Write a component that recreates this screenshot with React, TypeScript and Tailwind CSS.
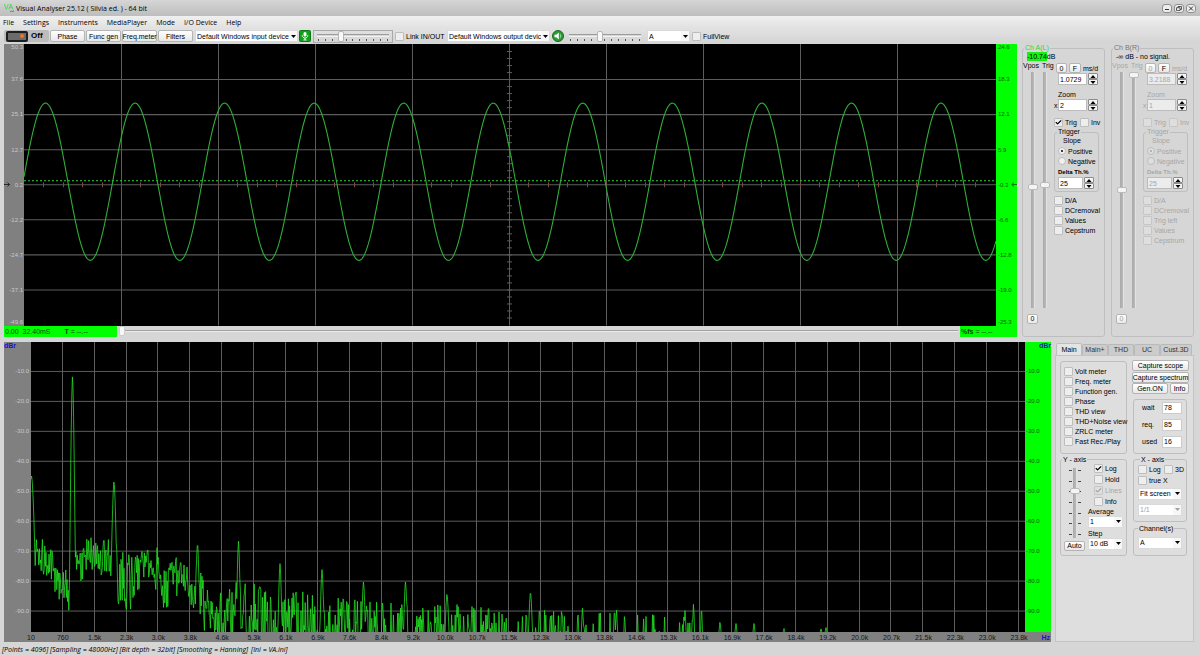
import React from "react";
import { Check } from "lucide-react";

/* ---------- signal data ---------- */

const SCOPE_W = 972;
const SCOPE_H = 281;
const SPEC_W = 994;
const SPEC_H = 291;

function wavePath(): string {
  const pts: string[] = [];
  for (let x = 0; x <= SCOPE_W; x += 1) {
    const y = 137.5 - 78.5 * Math.cos((2 * Math.PI * (x - 21.5)) / 89.55);
    pts.push(`${x} ${y.toFixed(1)}`);
  }
  return "M" + pts.join("L");
}

/* Noise band as [x, top, bottom] in plot units. */
const BAND: [number, number, number][] = [
  [0, 186, 205], [4, 200, 250], [6, 200, 220], [12, 192, 236], [20, 200, 244], [26, 218, 256],
  [32, 226, 278], [42, 204, 262], [48, 212, 248], [56, 190, 230], [64, 198, 226], [76, 192, 240],
  [84, 205, 255], [92, 208, 275], [100, 212, 270], [108, 208, 248], [116, 204, 235],
  [124, 220, 256], [132, 226, 272], [142, 216, 268], [150, 212, 240], [160, 230, 262],
  [168, 226, 285], [176, 234, 295], [186, 244, 310], [200, 238, 300], [224, 240, 310],
  [242, 252, 325], [270, 248, 325], [310, 254, 325], [350, 260, 335], [400, 262, 345],
  [480, 266, 365], [560, 270, 385], [620, 272, 400], [660, 274, 440], [680, 278, 620],
  [740, 280, 760], [800, 286, 1600], [994, 288, 3000],
];

/* Harmonic peaks as [x, top, half width]. */
const PEAKS: [number, number, number][] = [
  [0.5, 133, 4], [5.5, 196, 1], [41.5, 33, 3], [83, 138, 3], [127, 211, 1], [126, 205, 1], [143, 221, 1],
  [166.5, 200, 2], [207.5, 198, 2], [249, 221, 2], [291, 227, 2], [332.5, 239, 2], [374.5, 239, 2],
  [416, 251, 2], [426, 262, 1], [441, 264, 1], [457.5, 262, 1], [499.5, 249, 2], [508.5, 265, 1],
  [551.5, 265, 1], [583.5, 267, 1], [585.5, 267, 1], [654, 268, 1], [662.5, 261, 1], [670.5, 265, 1],
  [689, 279, 1], [705, 281, 1], [723, 281, 1], [753, 286, 1], [790, 286, 1], [795, 285, 1],
];

function bandAt(x: number): [number, number] {
  for (let i = 1; i < BAND.length; i++) {
    const [x1, t1, b1] = BAND[i];
    if (x <= x1) {
      const [x0, t0, b0] = BAND[i - 1];
      const k = (x - x0) / (x1 - x0);
      return [t0 + (t1 - t0) * k, b0 + (b1 - b0) * k];
    }
  }
  return [SPEC_H, SPEC_H];
}

function spectrumPath(): string {
  let seed = 4096;
  const rnd = () => {
    seed = (seed * 1103515245 + 12345) % 2147483648;
    return seed / 2147483648;
  };
  const pts: string[] = [];
  for (let x = 0; x <= 800; x += 0.6) {
    const [top, bottom] = bandAt(x);
    let y = top + (bottom - top) * rnd();
    for (const [px, py, w] of PEAKS) {
      const d = Math.abs(x - px);
      if (d <= w) {
        const edge = Math.min(top + 35, SPEC_H);
        y = Math.min(y, py + (edge - py) * Math.pow(d / w, 1.6));
      }
    }
    pts.push(`${x.toFixed(1)} ${Math.min(y + 1, SPEC_H + 2).toFixed(1)}`);
  }
  return "M" + pts.join("L");
}

const WAVE = wavePath();
const SPECTRUM = spectrumPath();

const SCOPE_LEFT = ["50.3", "37.6", "25.1", "12.7", "0.2", "-12.2", "-24.7", "-37.1", "-49.6"];
const SCOPE_RIGHT = ["24.6", "18.3", "12.1", "5.9", "-0.3", "-6.6", "-12.8", "-19.0", "-25.3"];
const DB = ["-10.0", "-20.0", "-30.0", "-40.0", "-50.0", "-60.0", "-70.0", "-80.0", "-90.0"];
const FREQ = [
  "10", "760", "1.5k", "2.3k", "3.0k", "3.8k", "4.6k", "5.3k", "6.1k", "6.9k", "7.6k", "8.4k", "9.2k",
  "10.0k", "10.7k", "11.5k", "12.3k", "13.0k", "13.8k", "14.6k", "15.3k", "16.1k", "16.9k", "17.6k",
  "18.4k", "19.2k", "20.0k", "20.7k", "21.5k", "22.3k", "23.0k", "23.8k",
];

/* ---------- controls ---------- */

function Btn({ children, className = "", disabled = false }: { children: React.ReactNode; className?: string; disabled?: boolean }) {
  return (
    <button
      disabled={disabled}
      className={`flex items-center justify-center whitespace-nowrap rounded-[2px] border border-[#b4b4b4] bg-gradient-to-b from-white to-[#e8e8e8] leading-none disabled:text-[#a0a0a0] ${className}`}
    >
      {children}
    </button>
  );
}

function Box({ label, checked = false, disabled = false, className = "" }: { label: string; checked?: boolean; disabled?: boolean; className?: string }) {
  return (
    <label className={`flex h-[10px] items-center gap-[2px] whitespace-nowrap leading-none ${disabled ? "text-[#a6a6a6]" : ""} ${className}`}>
      <span className="grid size-[9px] shrink-0 place-items-center">
        <input
          type="checkbox"
          defaultChecked={checked}
          disabled={disabled}
          className="peer col-start-1 row-start-1 size-[9px] appearance-none rounded-[1px] border border-[#bdbdbd] bg-[#eeeeee] disabled:border-[#c6c6c6] disabled:bg-[#dedede]"
        />
        <Check size={7} strokeWidth={4} className="pointer-events-none invisible col-start-1 row-start-1 peer-checked:visible" />
      </span>
      {label}
    </label>
  );
}

function Radio({ label, name, checked = false, disabled = false }: { label: string; name: string; checked?: boolean; disabled?: boolean }) {
  return (
    <label className="flex h-[10px] items-center gap-[2px] leading-none">
      <span className="grid size-2 shrink-0 place-items-center">
        <input
          type="radio"
          name={name}
          defaultChecked={checked}
          disabled={disabled}
          className="peer col-start-1 row-start-1 size-2 appearance-none rounded-full border border-[#bdbdbd] bg-[#f0f0f0] disabled:bg-[#dedede]"
        />
        <span className="pointer-events-none invisible col-start-1 row-start-1 size-[2px] rounded-full bg-current peer-checked:visible" />
      </span>
      {label}
    </label>
  );
}

function Pick({ value, label, className = "", disabled = false }: { value: string; label: string; className?: string; disabled?: boolean }) {
  return (
    <span className={`grid items-center border border-[#dadada] bg-white ${disabled ? "text-[#a0a0a0]" : ""} ${className}`}>
      <select
        aria-label={label}
        disabled={disabled}
        className="col-start-1 row-start-1 h-full w-full min-w-0 appearance-none overflow-hidden bg-transparent pl-px pr-[7px] leading-none"
      >
        <option>{value}</option>
      </select>
      <span className="pointer-events-none col-start-1 row-start-1 flex h-full w-[8px] items-center justify-center justify-self-end bg-[#f7f7f7]">
        <svg width="5" height="3" viewBox="0 0 5 3" fill="currentColor">
          <path d="M0 0H5L2.5 3Z" />
        </svg>
      </span>
    </span>
  );
}

function Spin({ value, label, className = "", disabled = false }: { value: string; label: string; className?: string; disabled?: boolean }) {
  const half = "flex h-[6px] w-[10px] items-center justify-center rounded-[1px] border border-[#8c8c8c] bg-[#f4f4f4]";
  return (
    <span className="flex h-3 gap-px">
      <input
        aria-label={label}
        defaultValue={value}
        disabled={disabled}
        className={`border border-[#bcbcbc] bg-white pl-px leading-none disabled:bg-[#ececec] ${className}`}
      />
      <span className="flex flex-col text-black">
        <button aria-label={`${label} up`} disabled={disabled} className={half}>
          <svg width="6" height="3" viewBox="0 0 6 3" fill="currentColor"><path d="M0.5 3H5.5L3 0Z" /></svg>
        </button>
        <button aria-label={`${label} down`} disabled={disabled} className={half}>
          <svg width="6" height="3" viewBox="0 0 6 3" fill="currentColor"><path d="M0.5 0H5.5L3 3Z" /></svg>
        </button>
      </span>
    </span>
  );
}

function Group({ title, children, className = "", legend = "" }: { title?: string; children: React.ReactNode; className?: string; legend?: string }) {
  return (
    <fieldset className={`min-w-0 rounded-[3px] border border-[#bebebe] ${className}`}>
      {title && <legend className={`whitespace-nowrap px-px leading-[8px] ${legend}`}>{title}</legend>}
      {children}
    </fieldset>
  );
}

function VSlider({ label, value, className = "", disabled = false }: { label: string; value: number; className?: string; disabled?: boolean }) {
  return (
    <input
      type="range"
      aria-label={label}
      defaultValue={value}
      disabled={disabled}
      className={`w-[10px] appearance-none bg-[linear-gradient(90deg,transparent_3px,#a9a9a9_3px,#b9b9b9_6px,#e2e2e2_6px,#e2e2e2_7px,transparent_7px)] [direction:rtl] [writing-mode:vertical-lr] [&::-webkit-slider-thumb]:h-[6px] [&::-webkit-slider-thumb]:w-[10px] [&::-webkit-slider-thumb]:appearance-none [&::-webkit-slider-thumb]:rounded-[2px] [&::-webkit-slider-thumb]:border [&::-webkit-slider-thumb]:border-[#bbbbbb] [&::-webkit-slider-thumb]:bg-[#f4f4f4] ${className}`}
    />
  );
}

function HSlider({ label, value }: { label: string; value: number }) {
  return (
    <span className="grid w-[72px] items-start">
      <input
        type="range"
        aria-label={label}
        defaultValue={value}
        className="z-10 col-start-1 row-start-1 h-[11px] w-full appearance-none bg-[linear-gradient(180deg,transparent_3px,#9c9c9c_3px,#9c9c9c_4px,#d8d8d8_4px,#d8d8d8_5px,#f2f2f2_5px,#f2f2f2_6px,transparent_6px)] [&::-webkit-slider-thumb]:h-[11px] [&::-webkit-slider-thumb]:w-[6px] [&::-webkit-slider-thumb]:appearance-none [&::-webkit-slider-thumb]:rounded-[2px] [&::-webkit-slider-thumb]:border [&::-webkit-slider-thumb]:border-[#b5b5b5] [&::-webkit-slider-thumb]:bg-[#f8f8f8]"
      />
      <span className="col-start-1 row-start-1 flex justify-between px-px pt-2">
        {Array.from({ length: 11 }, (_, i) => (
          <i key={i} className="h-[2px] w-px bg-[#555555]" />
        ))}
      </span>
    </span>
  );
}

/* ---------- top bars ---------- */

function TitleBar() {
  const ctl = "flex h-[9px] w-[10px] items-center justify-center rounded-[3px] border border-[#8f8f8f] bg-[#ededed]";
  return (
    <header className="flex h-4 shrink-0 items-center gap-[2px] bg-gradient-to-b from-[#d6d6d6] to-[#bdbdbd] pl-1 pr-1 font-['Open_Sans',sans-serif]">
      <svg width="10" height="10" viewBox="0 0 10 10" fill="none" strokeWidth="0.9">
        <path d="M0.3 1L2.4 6.4L4.4 1M4.8 6.4L6.8 1L8.9 6.4M5.5 4.6H8.2" stroke="#49d95a" />
        <path d="M6 8.5H7.4V7.5M8 8.5H9.6V7.4" stroke="#e0503a" />
      </svg>
      <h1>Visual Analyser 25.12 ( Silvia ed. ) - 64 bit</h1>
      <div className="ml-auto flex gap-[2px]">
        <button aria-label="Minimize" className={ctl}>
          <svg width="6" height="5" viewBox="0 0 6 5" stroke="#333333"><path d="M1 3.5H5" /></svg>
        </button>
        <button aria-label="Restore" className={ctl}>
          <svg width="6" height="5" viewBox="0 0 6 5" stroke="#333333" strokeWidth="0.8" fill="none"><path d="M2 1.5V.5H5.5V3.4H4M.5 1.7H4V4.6H.5Z" /></svg>
        </button>
        <button aria-label="Close" className={ctl}>
          <svg width="6" height="5" viewBox="0 0 6 5" stroke="#333333"><path d="M1 .5L5 4.5M5 .5L1 4.5" /></svg>
        </button>
      </div>
    </header>
  );
}

function MenuBar() {
  return (
    <nav className="flex h-[13px] shrink-0 items-center gap-[9px] bg-gradient-to-b from-[#f0f0f0] to-[#e0e0e0] pl-[3px] font-['Open_Sans',sans-serif]">
      {["File", "Settings", "Instruments", "MediaPlayer", "Mode", "I/O Device", "Help"].map((m) => (
        <a key={m} href="#" className="whitespace-nowrap leading-none">{m}</a>
      ))}
    </nav>
  );
}

function ToolBar() {
  return (
    <div className="flex h-[14px] shrink-0 items-center bg-gradient-to-b from-[#e2e2e2] to-[#d4d4d4] pl-1">
      <button className="mr-px flex h-3 w-[45px] items-center gap-[3px] rounded-[2px] bg-[#bcbcbc] pl-[2px] text-[8px] font-bold leading-none">
        <span className="flex h-[11px] w-[22px] items-center justify-end rounded-[2px] border-2 border-[#1d1d1d] bg-[#6b6b6b] pr-[2px]">
          <span className="size-1 rounded-full bg-[#f0742c]" />
        </span>
        Off
      </button>
      <div className="flex gap-px">
        {["Phase", "Func gen", "Freq.meter", "Filters"].map((b) => (
          <Btn key={b} className="h-3 w-[35px]">{b}</Btn>
        ))}
      </div>
      <Pick label="Input device" value="Default Windows input device" className="ml-[2px] h-3 w-[103px]" />
      <svg width="12" height="12" viewBox="0 0 12 12" className="mx-px">
        <rect x="0.5" y="0.5" width="11" height="11" rx="1" fill="#12a01c" stroke="#0b7a14" />
        <rect x="4.5" y="2" width="3" height="4.5" rx="1.5" fill="#ffffff" />
        <path d="M3.2 5.2C3.2 9 8.8 9 8.8 5.2M6 8V10M4.4 10H7.6" stroke="#ffffff" fill="none" strokeWidth="0.9" />
      </svg>
      <span className="ml-px flex h-[13px] w-[80px] items-center justify-center border border-[#a9a9a9]">
        <HSlider label="Input level" value={32} />
      </span>
      <Box label="Link IN/OUT" className="ml-[2px] mr-px w-[51px]" />
      <Pick label="Output device" value="Default Windows output devic" className="h-3 w-[103px]" />
      <svg width="12" height="12" viewBox="0 0 12 12" className="ml-[2px] mr-[5px]">
        <circle cx="6" cy="6" r="5.5" fill="#2c9a35" stroke="#176b1f" />
        <path d="M2.5 4.8H4.2L6.8 2.6V9.4L4.2 7.2H2.5Z" fill="#ffffff" />
        <path d="M8 4.2C9 5.2 9 6.8 8 7.8" stroke="#bdf0c0" fill="none" strokeWidth="0.8" />
      </svg>
      <HSlider label="Output level" value={43} />
      <Pick label="Channel" value="A" className="ml-[6px] mr-[2px] h-3 w-[43px]" />
      <Box label="FullView" />
    </div>
  );
}

/* ---------- oscilloscope ---------- */

function LevelColumn({ labels, className }: { labels: string[]; className: string }) {
  const last = labels.length - 1;
  return (
    <div className={`flex shrink-0 flex-col text-[6px] ${className}`}>
      <span className="h-0 leading-[7px]">{labels[0]}</span>
      {labels.slice(1, last).map((l) => (
        <span key={l} className="flex min-h-0 flex-1 items-end leading-[0px]">{l}</span>
      ))}
      <span className="flex min-h-0 flex-1 items-end leading-[7px]">{labels[last]}</span>
    </div>
  );
}

function Scope() {
  return (
    <section className="flex min-h-0 min-w-0 flex-1 flex-col">
      <div className="flex min-h-0 flex-1">
        <div className="flex w-5 shrink-0 justify-between bg-[#808080] pr-px">
          <svg viewBox="0 0 6 5" className="h-[5px] w-[6px] shrink-0 self-center" stroke="#111111" fill="none">
            <path d="M0 2.5H5.5M3.5 .5L5.5 2.5L3.5 4.5" strokeWidth="0.8" />
          </svg>
          <LevelColumn labels={SCOPE_LEFT} className="w-[13px] items-end text-[#c9c9c9]" />
        </div>
        <svg viewBox={`0 0 ${SCOPE_W} ${SCOPE_H}`} preserveAspectRatio="none" className="h-full min-h-0 w-0 min-w-0 flex-1 bg-black" fill="none">
          <g stroke="#5c5c5c">
            {[1, 2, 3, 4, 5, 6, 7, 8, 9].map((i) => (
              <path key={i} d={`M${Math.round(97 * i) + 0.5} 0V${SCOPE_H}`} />
            ))}
            {[1, 2, 3, 4, 5, 6, 7].map((i) => (
              <path key={i} d={`M0 ${35 * i + 0.5}H${SCOPE_W}`} />
            ))}
            {Array.from({ length: 39 }, (_, i) => (
              <path key={i} d={`M483 ${7 * (i + 1) + 0.5}H488`} />
            ))}
          </g>
          <g stroke="#7a4a42">
            {Array.from({ length: 49 }, (_, i) => (
              <path key={i} d={`M${Math.round(19.4 * (i + 1)) + 0.5} 138V143`} />
            ))}
          </g>
          <path d={`M0 136.5H${SCOPE_W}`} stroke="#2fd33c" strokeDasharray="2 2" />
          <path d={WAVE} stroke="#2fae38" strokeWidth="1.1" />
        </svg>
        <div className="flex w-[21px] shrink-0 justify-between bg-[#00ff00] pl-[2px]">
          <LevelColumn labels={SCOPE_RIGHT} className="w-[12px] text-[#0b5a0b]" />
          <svg viewBox="0 0 6 5" className="h-[5px] w-[6px] shrink-0 self-center" stroke="#0b5a0b" fill="none">
            <path d="M6 2.5H1M3 .5L.7 2.5L3 4.5" strokeWidth="0.8" />
          </svg>
        </div>
      </div>
      <div className="flex h-[11px] shrink-0 items-center">
        <div className="flex h-full w-[113px] items-center gap-[14px] bg-[#00ff00] pl-px leading-none text-[#063d06]">
          <span>0.00&nbsp; 32.40mS</span>
          <span><b>T</b> = --.--</span>
        </div>
        <input
          type="range"
          aria-label="Time position"
          defaultValue={0}
          className="mx-[2px] h-[10px] min-w-0 flex-1 appearance-none bg-[linear-gradient(180deg,transparent_4px,#a0a0a0_4px,#a0a0a0_5px,#ececec_5px,#ececec_6px,transparent_6px)] [&::-webkit-slider-thumb]:h-[10px] [&::-webkit-slider-thumb]:w-[6px] [&::-webkit-slider-thumb]:appearance-none [&::-webkit-slider-thumb]:rounded-[2px] [&::-webkit-slider-thumb]:border [&::-webkit-slider-thumb]:border-[#cccccc] [&::-webkit-slider-thumb]:bg-[#f8f8f8]"
        />
        <div className="flex h-full w-[57px] items-center bg-[#00ff00] pl-px leading-none text-[#063d06]">
          <span><b>%fs</b> = --.--</span>
        </div>
      </div>
    </section>
  );
}

/* ---------- channel panels ---------- */

interface ChannelProps {
  title: string;
  titleClass: string;
  level: React.ReactNode;
  msd: string;
  zoom: string;
  pos: number;
  trig: number;
  flags: string[];
  off?: boolean;
}

function Channel({ title, titleClass, level, msd, zoom, pos, trig, flags, off = false }: ChannelProps) {
  return (
    <Group title={title} legend={titleClass} className={`flex w-[83px] flex-col ${off ? "text-[#a6a6a6]" : ""}`}>
      <div className="ml-[4px] whitespace-nowrap leading-[9px]">{level}</div>
      <div className="flex min-h-0 flex-1">
        <div className="flex w-[31px] shrink-0 flex-col pb-3">
          <div className="flex gap-[3px] whitespace-nowrap leading-[10px]">
            <span>Vpos</span>
            <span>Trig</span>
          </div>
          <div className="flex min-h-0 flex-1 gap-[2px] pb-[6px] pl-[5px] pt-px">
            <VSlider label={`${title} vertical position`} value={pos} disabled={off} />
            <VSlider label={`${title} trigger level`} value={trig} disabled={off} />
          </div>
          <Btn disabled={off} className="ml-1 h-[10px] w-[11px]">0</Btn>
        </div>
        <div className="flex min-w-0 flex-1 flex-col pt-[2px]">
          <div className="ml-[2px] flex items-center gap-[2px] leading-none">
            <Btn disabled={off} className="h-[10px] w-[11px]">0</Btn>
            <Btn className="h-[10px] w-[12px] text-black">F</Btn>
            <span className="whitespace-nowrap">ms/d</span>
          </div>
          <div className="ml-1">
            <Spin label={`${title} ms/d`} value={msd} disabled={off} className="w-[29px]" />
          </div>
          <div className="ml-1 mt-[6px] leading-[8px]">Zoom</div>
          <div className="flex items-center">
            <span className="w-1 leading-none">x</span>
            <Spin label={`${title} zoom`} value={zoom} disabled={off} className="w-[29px]" />
          </div>
          <div className="mt-[6px] flex gap-[2px]">
            <Box label="Trig" checked={!off} disabled={off} className="w-[24px]" />
            <Box label="Inv" disabled={off} />
          </div>
          <Group title="Trigger" legend="ml-[2px]" className="mt-px w-[45px] pb-[2px]">
            <div className="pl-2 leading-[10px]">Slope</div>
            <div className="pl-[3px]">
              <Radio name={title} label="Positive" checked disabled={off} />
              <Radio name={title} label="Negative" disabled={off} />
              <div className="mt-px whitespace-nowrap text-[6px] font-bold leading-[10px]">Delta Th.%</div>
              <Spin label={`${title} delta threshold`} value="25" disabled={off} className="w-[25px]" />
            </div>
          </Group>
          <div className="mt-[3px]">
            {flags.map((f) => (
              <Box key={f} label={f} disabled={off} />
            ))}
          </div>
        </div>
      </div>
    </Group>
  );
}

/* ---------- spectrum ---------- */

function DbColumn({ className, head }: { className: string; head: string }) {
  return (
    <div className={`flex shrink-0 flex-col text-[6px] ${className}`}>
      <div className="flex h-0 overflow-visible">
        <b className="h-[7px] text-[7px] leading-[7px] text-[#1414d8]">{head}</b>
      </div>
      {DB.map((l) => (
        <span key={l} className="flex min-h-0 flex-[30] flex-col justify-end leading-[0px]">{l}</span>
      ))}
      <span className="flex-[21]" />
    </div>
  );
}

function Spectrum() {
  return (
    <section className="flex min-h-0 min-w-0 flex-1 flex-col">
      <div className="flex min-h-0 flex-1">
        <div className="flex w-[27px] shrink-0 bg-[#808080]">
          <DbColumn head="dBr" className="w-[25px] text-right text-[#c9c9c9]" />
        </div>
        <svg viewBox={`0 0 ${SPEC_W} ${SPEC_H}`} preserveAspectRatio="none" className="h-full min-h-0 w-0 min-w-0 flex-1 bg-black" fill="none">
          <g stroke="#5c5c5c">
            {Array.from({ length: 31 }, (_, i) => (
              <path key={i} d={`M${Math.round(31.87 * (i + 1)) - 0.5} 0V${SPEC_H}`} />
            ))}
            {DB.map((l, i) => (
              <path key={l} d={`M0 ${30 * (i + 1) - 0.5}H${SPEC_W}`} />
            ))}
          </g>
          <path d={SPECTRUM} stroke="#22dd22" strokeWidth="0.8" strokeLinejoin="bevel" />
        </svg>
        <div className="flex w-[26px] shrink-0 bg-[#00ff00] pl-px">
          <div className="flex w-full">
            <DbColumn head="" className="w-[13px] text-[#0b5a0b]" />
            <b className="leading-[7px] text-[#1414d8]">dBr</b>
          </div>
        </div>
      </div>
      <div className="flex h-[10px] shrink-0 items-center bg-[#808080] pl-[11px] leading-none text-[#151515]">
        {FREQ.map((f) => (
          <span key={f} className="w-0 flex-1 text-center">{f}</span>
        ))}
        <b className="w-4 pr-px text-right text-[#1414d8]">Hz</b>
      </div>
    </section>
  );
}

function ReadOut({ label, value }: { label: string; value: string }) {
  return (
    <label className="flex h-3 items-center justify-between pl-2 pr-1 leading-none">
      {label}
      <input defaultValue={value} className="h-3 w-5 border border-[#cccccc] bg-white pl-px leading-none" />
    </label>
  );
}

function SidePanel() {
  const tabs = ["Main", "Main+", "THD", "UC", "Cust.3D"];
  return (
    <aside className="flex w-[139px] shrink-0 flex-col">
      <div role="tablist" className="flex h-[13px] items-end pl-px">
        {tabs.map((t, i) => (
          <button
            key={t}
            role="tab"
            aria-selected={i === 0}
            className={
              i === 0
                ? "h-3 w-[26px] rounded-t-[2px] border border-b-0 border-[#bdbdbd] bg-[#e4e4e4] leading-none"
                : i === 4
                  ? "h-[11px] w-8 whitespace-nowrap rounded-t-[2px] border border-b-0 border-[#b9b9b9] bg-[#cccccc] leading-none text-[#333333]"
                  : "h-[11px] w-[26px] whitespace-nowrap rounded-t-[2px] border border-b-0 border-[#b9b9b9] bg-[#cccccc] leading-none text-[#333333]"
            }
          >
            {t}
          </button>
        ))}
      </div>
      <div className="flex min-h-0 flex-1 items-start gap-[5px] border border-[#c4c4c4] bg-[#dedede] pl-1 pt-1">
        <div className="flex w-[67px] shrink-0 flex-col">
          <Group className="mt-px h-[93px] pl-[3px] pt-[5px]">
            {["Volt meter", "Freq. meter", "Function gen.", "Phase", "THD view", "THD+Noise view", "ZRLC meter", "Fast Rec./Play"].map((l) => (
              <Box key={l} label={l} />
            ))}
          </Group>
          <Group title="Y - axis" legend="ml-px" className="mt-[2px] h-[100px]">
            <div className="flex">
              <div className="flex w-[27px] flex-col items-center pt-1">
                <span className="grid place-items-center">
                  <span className="col-start-1 row-start-1 flex h-[65px] flex-col justify-between">
                    {Array.from({ length: 7 }, (_, i) => (
                      <i key={i} className="h-px w-3 bg-[linear-gradient(90deg,#444_3px,transparent_3px,transparent_9px,#444_9px)]" />
                    ))}
                  </span>
                  <VSlider label="Y scale" value={68} className="col-start-1 row-start-1 h-[70px]" />
                </span>
                <Btn className="mt-[3px] h-[10px] w-[21px]">Auto</Btn>
              </div>
              <div className="flex flex-col">
                <div className="flex flex-col gap-px pl-[6px]">
                  <Box label="Log" checked />
                  <Box label="Hold" />
                  <Box label="Lines" checked disabled />
                  <Box label="Info" />
                </div>
                <span className="leading-[9px]">Average</span>
                <Pick label="Average" value="1" className="h-3 w-[35px]" />
                <span className="mt-px leading-[9px]">Step</span>
                <Pick label="Step" value="10 dB" className="h-3 w-[35px]" />
              </div>
            </div>
          </Group>
        </div>
        <div className="flex w-[57px] shrink-0 flex-col">
          <Btn className="h-[11px]">Capture scope</Btn>
          <Btn className="mt-px h-[11px]">Capture spectrum</Btn>
          <div className="flex gap-[2px]">
            <Btn className="h-[11px] w-[36px]">Gen.ON</Btn>
            <Btn className="h-[11px] flex-1">Info</Btn>
          </div>
          <Group className="ml-px mt-[5px] flex h-[55px] w-[54px] flex-col gap-[5px] pt-[2px]">
            <ReadOut label="wait" value="78" />
            <ReadOut label="req." value="85" />
            <ReadOut label="used" value="16" />
          </Group>
          <Group title="X - axis" legend="ml-[2px]" className="ml-px mt-[2px] h-[66px] w-[54px] pl-1">
            <div className="mt-px flex">
              <Box label="Log" className="w-[26px]" />
              <Box label="3D" />
            </div>
            <Box label="true X" className="mt-px" />
            <Pick label="Fit" value="Fit screen" className="mt-[2px] h-3 w-[44px]" />
            <Pick label="Ratio" value="1/1" disabled className="mt-1 h-3 w-[44px]" />
          </Group>
          <Group title="Channel(s)" className="ml-px mt-[3px] h-[31px] w-[54px] pl-1 pt-1">
            <Pick label="Channels" value="A" className="h-3 w-[44px]" />
          </Group>
        </div>
      </div>
    </aside>
  );
}

export default function App() {
  return (
    <div className="flex h-screen min-h-[620px] flex-col bg-[#d6d6d6] font-['Liberation_Sans',Arial,sans-serif] text-[7px] leading-none text-black">
      <TitleBar />
      <MenuBar />
      <ToolBar />
      <main className="flex min-h-0 flex-1 flex-col gap-[5px] pl-1">
        <div className="flex min-h-0 flex-[293] gap-[5px] pr-[6px] pt-px">
          <Scope />
          <div className="flex shrink-0 gap-[6px]">
            <Channel
              title="Ch A(L)"
              titleClass="ml-px text-[#22dd33]"
              level={<><span className="bg-[#14f014] py-px">-10.74</span>dB</>}
              msd="1.0729"
              zoom="2"
              pos={51}
              trig={52}
              flags={["D/A", "DCremoval", "Values", "Cepstrum"]}
            />
            <Channel
              title="Ch B(R)"
              titleClass="ml-px text-[#777777]"
              level={<span className="text-black">-∞ dB - no signal.</span>}
              msd="3.2188"
              zoom="1"
              pos={50}
              trig={100}
              flags={["D/A", "DCremoval", "Trig left", "Values", "Cepstrum"]}
              off
            />
          </div>
        </div>
        <div className="flex min-h-0 flex-[301] gap-1 pr-[6px]">
          <Spectrum />
          <SidePanel />
        </div>
      </main>
      <footer className="flex h-[14px] shrink-0 items-center gap-[3px] pl-[2px] font-['Open_Sans',sans-serif] italic">
        <span>[Points = 4096] [Sampling = 48000Hz] [Bit depth = 32bit] [Smoothing = Hanning]</span>
        <span>[Ini = VA.ini]</span>
      </footer>
    </div>
  );
}
